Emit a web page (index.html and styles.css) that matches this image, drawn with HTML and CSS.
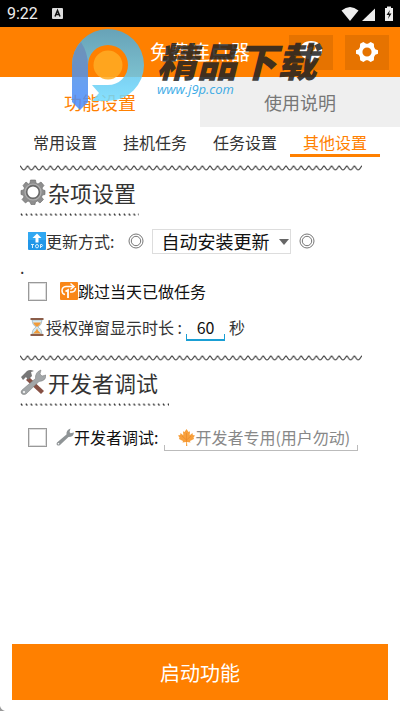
FILE: index.html
```html
<!DOCTYPE html>
<html lang="zh-CN">
<head>
    <meta charset="UTF-8">
    <meta name="viewport" content="width=device-width, initial-scale=1.0">
    <title>免费连点器</title>
    <link rel="stylesheet" href="styles.css">
</head>
<body>
    <!-- shared line patterns -->
    <svg class="defs" aria-hidden="true">
        <defs>
            <pattern id="wave" width="7.6" height="6" patternUnits="userSpaceOnUse">
                <path d="M-1 .5C1 .5 2 5 3.8 5S6.600 .5 8.600 .5" fill="none" stroke="#444" stroke-width="1.100"/>
            </pattern>
            <pattern id="ticks" width="4.900" height="4" patternUnits="userSpaceOnUse">
                <path d="M1 .7l1.300 2" fill="none" stroke="#333" stroke-width="1.300"/>
            </pattern>
        </defs>
    </svg>

    <div class="status">
        <span class="time">9:22</span>
        <svg class="badge" width="11" height="11" viewBox="0 0 11 11">
            <rect width="11" height="11" rx="1" fill="#ddd"/>
            <path d="M3 8.500L5.500 2.500 8 8.500M4 6.500h3" fill="none" stroke="#111" stroke-width="1.500"/>
        </svg>
        <svg class="signals" width="52" height="16" viewBox="0 0 52 16">
            <path d="M.5 4.500Q9-2.500 17.500 4.500L9 15z" fill="#eee"/>
            <path d="M34 2.500V15H21z" fill="#eee"/>
            <path d="M44 2h2V.5h4V2h2v13h-8z" fill="#eee"/>
            <path d="M49 4l-3.500 5H48l-1 4 3.500-5.500H48z" fill="#111"/>
        </svg>
    </div>

    <header class="header">
        <h1 class="title">免费连点器</h1>
        <div class="actions">
            <button class="icon-btn" aria-label="消息">
                <svg width="24" height="22" viewBox="0 0 24 22">
                    <path d="M12 0C5 0 1 4 1 9.500S5 18 10 18v4c7-2 13-7 13-12.500S19 0 12 0z" fill="#fff"/>
                    <path d="M8 7q0-4 4-4t4 4q0 2-2 3-1 1-1 3h-2q0-3 2-5 1-1 0-2t-3 1z" fill="#e07000"/>
                </svg>
            </button>
            <button class="icon-btn" aria-label="设置">
                <svg width="22" height="22" viewBox="0 0 24 24">
                    <path fill="#fff" fill-rule="evenodd" d="M8 1l3 2h2l3-2 3.500 2 .2 3.500L21 9l3 1v4l-3 1-1.300 2.500-.2 3.500L16 23l-3-2h-2l-3 2-3.500-2-.2-3.500L3 15l-3-1v-4l3-1 1.300-2.500L4.500 3zM12 7a5 5 0 1 0 0 10 5 5 0 0 0 0-10z"/>
                </svg>
            </button>
        </div>
    </header>

    <nav class="tabs">
        <a href="#settings" class="tab active">功能设置</a>
        <a href="#help" class="tab">使用说明</a>
    </nav>
    <nav class="subtabs">
        <a href="#common">常用设置</a>
        <a href="#idle">挂机任务</a>
        <a href="#task">任务设置</a>
        <a href="#other" class="active">其他设置</a>
    </nav>

    <main class="content" id="settings">
        <svg class="wave"><rect width="100%" height="6" fill="url(#wave)"/></svg>
        <h2 class="heading">
            <svg width="26" height="26" viewBox="0 0 26 26">
                <path fill="#8e8e8e" stroke="#686868" stroke-width=".6" fill-rule="evenodd" d="M10.500 1h5l.5 3 2 1 3-2 3 3.500-2 2.500 1 2 2 .5v4l-2.500.5-1 2 2 2.500-3.500 3.500-2.500-2-2 1-.5 2.500h-4l-1-2.500-2-1-2.500 2L2 20.500 4 18l-1-2-2-.5v-4L3.500 11l1-2L3 6.500 6 3l2.500 2L10 4z"/>
                <circle cx="13" cy="13" r="6.300" fill="#fff" stroke="#666" stroke-width="1.500"/>
                <circle cx="13" cy="13" r="8" fill="none" stroke="#b0b0b0" stroke-width="1.200"/>
            </svg>
            <span>杂项设置</span>
        </h2>
        <svg class="ticks short"><rect width="100%" height="4" fill="url(#ticks)"/></svg>

        <div class="row update">
            <svg width="18" height="18" viewBox="0 0 18 18">
                <rect width="18" height="18" rx="1" fill="#2196e8"/>
                <rect width="18" height="8" rx="1" fill="#31a8f2"/>
                <path d="M9 1.500L4.500 6H7.500v4.500h3V6h3z" fill="#fff"/>
                <path d="M3 12.500h3M4.500 12.500V16M12.500 16v-3.500h1.500q1.200 1 0 2h-1.500" fill="none" stroke="#d8f0ff"/>
                <ellipse cx="9" cy="14.200" rx="1.500" ry="1.700" fill="none" stroke="#d8f0ff"/>
            </svg>
            <label for="update">更新方式:</label>
            <svg class="ring" width="16" height="16" viewBox="0 0 16 16">
                <circle cx="8" cy="8" r="7" fill="none" stroke="#666" stroke-width=".9"/>
                <circle cx="8" cy="8" r="4.700" fill="none" stroke="#666" stroke-width=".9"/>
            </svg>
            <div class="select">
                <select id="update">
                    <option>自动安装更新</option>
                    <option>手动安装更新</option>
                </select>
            </div>
            <svg class="ring" width="16" height="16" viewBox="0 0 16 16">
                <circle cx="8" cy="8" r="7" fill="none" stroke="#666" stroke-width=".9"/>
                <circle cx="8" cy="8" r="4.700" fill="none" stroke="#666" stroke-width=".9"/>
            </svg>
        </div>
        <p class="dot">.</p>
        <div class="row">
            <input type="checkbox" id="skip">
            <label for="skip" class="check-label">
                <svg width="18" height="18" viewBox="0 0 18 18">
                    <rect width="18" height="18" rx="1" fill="#f98718"/>
                    <path d="M5 12.500Q2 12 2 8.500T6 4.500h7M10.500 1.500L14 4.500l-3.500 3M12 10q3.500-.5 3.500-4M10 10h3" fill="none" stroke="#fff" stroke-width="1.500"/>
                    <path d="M5.500 9.500L8 8v8" fill="none" stroke="#fff" stroke-width="1.800"/>
                </svg>
                <span>跳过当天已做任务</span>
            </label>
        </div>
        <div class="row duration">
            <svg width="18" height="18" viewBox="0 0 18 18">
                <path d="M4 2h10q0 5-4 7 4 2 4 7H4q0-5 4-7-4-2-4-7z" fill="#d4e9f3" stroke="#91a7b2" stroke-width=".6"/>
                <path d="M5 4.500h8Q12 7 9 9 6 7 5 4.500zM9 10q0 2 4 5.500H5Q9 12 9 10z" fill="#ef9a39"/>
                <path d="M2.500 0h13v2h-13zM2.500 16h13v2h-13z" fill="#8b5d49"/>
            </svg>
            <label for="seconds">授权弹窗显示时长 :</label>
            <div class="field seconds"><input type="text" id="seconds" value="60"></div>
            <span>秒</span>
        </div>

        <svg class="wave"><rect width="100%" height="6" fill="url(#wave)"/></svg>
        <h2 class="heading">
            <svg width="26" height="26" viewBox="0 0 26 26">
                <path d="M9 8l15 14-3 3L6 11z" fill="#865044"/>
                <path d="M1 8l6-6q3-2 7 0l-3 1 1 4-4 4-2-3-3 3z" fill="#777"/>
                <path d="M2 21L15.500 9.500Q15 3 21 1l-1 4 2 2 4-1q0 6-7 6.500L6 25q-2 1-4 0-2-2 0-4z" fill="#a2a6a8" stroke="#777" stroke-width=".5"/>
                <circle cx="4" cy="23" r="1" fill="#fff"/>
            </svg>
            <span>开发者调试</span>
        </h2>
        <svg class="ticks"><rect width="100%" height="4" fill="url(#ticks)"/></svg>

        <div class="row debug">
            <input type="checkbox" id="debug">
            <label for="debug" class="check-label">
                <svg width="18" height="18" viewBox="0 0 18 18">
                    <path d="M1 14.500l9.500-8Q10 2 14.500.5L13.500 4l1 1.200L18 4.500Q17.500 9 12.500 9L4 17q-1.500 1-3 0-1-1 0-2.500z" fill="#8f9496"/>
                    <circle cx="2.500" cy="15.800" r=".8" fill="#fff"/>
                </svg>
                <span>开发者调试:</span>
            </label>
            <div class="field developer">
                <svg width="17" height="17" viewBox="0 0 17 17">
                    <path d="M8.500 0l2 3 1.500-.7-.3 4L14.500 4l.3 2 2.200.5-1.500 2L16 10l-4 2 .5 1.500-3.500-.5.300 4H8l.2-4-3.700.5L5 12l-4-2 .5-1.500L0 6.500 2.200 6l.3-2 2.800 2.300-.3-4 1.500.7z" fill="#f8a03c"/>
                    <path d="M8.500 4v9M8.500 11L4 7M8.500 11L13 7" fill="none" stroke="#e88428" stroke-width=".6"/>
                </svg>
                <input type="text" placeholder="开发者专用(用户勿动)" aria-label="开发者专用">
            </div>
        </div>
    </main>

    <footer class="footer">
        <button class="start">启动功能</button>
    </footer>

    <div class="watermark" aria-hidden="true">
        <svg width="74" height="82" viewBox="0 0 74 82">
            <defs>
                <linearGradient id="ring" x1="0" y1="0" x2="0" y2="1">
                    <stop offset="0" stop-color="#4fa9d6"/>
                    <stop offset="1" stop-color="#73dcff"/>
                </linearGradient>
                <linearGradient id="stem" x1="0" y1="0" x2="0" y2="1">
                    <stop offset="0" stop-color="#5598d8"/>
                    <stop offset="1" stop-color="#4c8cff"/>
                </linearGradient>
            </defs>
            <path d="M1 36A36 36 0 1 1 37 72H21L28 64 21 56H37A20 20 0 1 0 17 36L12 50z" fill="url(#ring)"/>
            <path d="M1 36Q1 22 10 13Q17 24 17 36V73L9 81 1 73z" fill="url(#stem)"/>
            <circle cx="37" cy="36" r="14.500" fill="#ffac24"/>
        </svg>
        <div class="brand">
            <strong>精品下载</strong>
            <span>www.j9p.com</span>
        </div>
    </div>
    <svg class="corner" width="5" height="5" viewBox="0 0 5 5" aria-hidden="true"><path d="M0 0q1 4 5 5H0z" fill="#999"/></svg>
</body>
</html>
```
FILE: styles.css
```css
* {
    box-sizing: border-box;
}
body {
    position: relative;
    display: flex;
    flex-direction: column;
    min-height: 100vh;
    margin: 0;
    background: #fff;
    color: #333;
    font-family: 'Noto Sans CJK SC', sans-serif;
    font-size: 16px;
    line-height: 24px;
}
a {
    color: inherit;
    text-decoration: none;
}
svg {
    display: block;
    flex: none;
}
button, input, select {
    font-family: inherit;
    margin: 0;
    padding: 0;
    border: 0;
    border-radius: 0;
}
.defs {
    position: absolute;
    width: 0;
    height: 0;
}

.status {
    display: flex;
    align-items: center;
    height: 27px;
    padding: 0 7px;
    background: #000;
    color: #eee;
}
.time {
    font-family: Roboto, sans-serif;
}
.badge {
    margin-left: 14px;
}
.signals {
    margin-left: auto;
}

.header {
    display: grid;
    grid-template-columns: 1fr auto 1fr;
    align-items: center;
    height: 50px;
    background: #ff8000;
}
.title {
    grid-column: 2;
    margin: 0;
    color: #fff;
    font-size: 20px;
    font-weight: 400;
}
.actions {
    display: flex;
    justify-content: flex-end;
    gap: 12px;
    padding-right: 11px;
}
.icon-btn {
    display: flex;
    align-items: center;
    justify-content: center;
    width: 44px;
    height: 35px;
    background: #e67300;
}

.tabs {
    display: flex;
}
.tab {
    flex: 1;
    height: 50px;
    line-height: 50px;
    text-align: center;
    font-size: 18px;
    background: #efefef;
    color: #777;
}
.tab.active {
    background: #fff;
    color: #ff8000;
}

.subtabs {
    display: flex;
    padding: 0 20px;
}
.subtabs a {
    flex: 1;
    height: 30px;
    line-height: 30px;
    text-align: center;
}
.subtabs .active {
    color: #ff8000;
    border-bottom: 3px solid #ff8000;
}

.content {
    flex: 1;
    padding: 8px 38px 0 20px;
}
.wave {
    width: 100%;
    height: 6px;
}
.heading {
    display: flex;
    align-items: center;
    gap: 2px;
    height: 42px;
    margin: 0;
    font-size: 22px;
    font-weight: 400;
}
.ticks {
    width: 149px;
    height: 4px;
}
.ticks.short {
    width: 119px;
}
.row {
    display: flex;
    align-items: center;
    height: 36px;
    padding-left: 8px;
    white-space: nowrap;
}
.update {
    height: 40px;
    margin-top: 4px;
    padding-left: 8px;
}
.ring {
    margin: 0 8px;
}
.update label + .ring {
    margin-left: 14px;
}
.select {
    position: relative;
}
.select::after {
    content: '';
    position: absolute;
    right: 2px;
    top: 10px;
    border: 5px solid transparent;
    border-top: 6px solid #666;
    border-bottom: 0;
    pointer-events: none;
}
select {
    appearance: none;
    display: block;
    width: 139px;
    height: 25px;
    padding-left: 8px;
    border: 1px solid #ddd;
    background: #fff;
    color: #111;
    font-size: 18px;
    line-height: 23px;
}
.dot {
    height: 12px;
    margin: 0;
    line-height: 12px;
}
input[type="checkbox"] {
    appearance: none;
    flex: none;
    width: 19px;
    height: 19px;
    border: 1px solid #999;
    outline: 1px solid #ddd;
    outline-offset: -2px;
}
.check-label {
    display: flex;
    align-items: center;
    margin-left: 13px;
    color: #111;
}
.duration {
    margin-bottom: 10px;
}
.field {
    position: relative;
    display: flex;
    align-items: center;
    height: 28px;
}
.field::after {
    content: '';
    position: absolute;
    left: 0;
    right: 0;
    bottom: 0;
    height: 5px;
    border: 1px solid #bbb;
    border-top: 0;
    pointer-events: none;
}
.field input {
    min-width: 0;
    width: 100%;
    background: none;
    color: #111;
    font-size: 16px;
}
.field input::placeholder {
    color: #888;
    opacity: 1;
}
.seconds {
    width: 39px;
    margin: 0 4px;
}
.seconds::after {
    border-color: #1a9fd4;
    border-bottom-width: 2px;
}
.seconds input {
    text-align: center;
}
.debug {
    margin-top: 12px;
    padding-right: 4px;
}
.debug .check-label {
    margin-left: 9px;
}
.developer {
    flex: 1;
    margin-left: 6px;
    padding-left: 14px;
}

.footer {
    padding: 0 12px 11px;
}
.start {
    display: block;
    width: 100%;
    height: 56px;
    background: #ff8000;
    color: #fff;
    font-size: 20px;
}

/* site mark lying over the header */
.watermark {
    position: absolute;
    top: 29px;
    left: 71px;
    display: flex;
    opacity: 0.86;
    pointer-events: none;
}
.brand {
    display: flex;
    flex-direction: column;
    margin: 9px 0 0 12px;
    font-style: italic;
}
.brand strong {
    color: #222;
    font-size: 40px;
    font-weight: 900;
    line-height: 44px;
}
.brand span {
    color: #1a9fe4;
    font-family: 'Open Sans', sans-serif;
    font-size: 13px;
    line-height: 14px;
}
.corner {
    position: absolute;
    left: 0;
    bottom: 0;
}
```
